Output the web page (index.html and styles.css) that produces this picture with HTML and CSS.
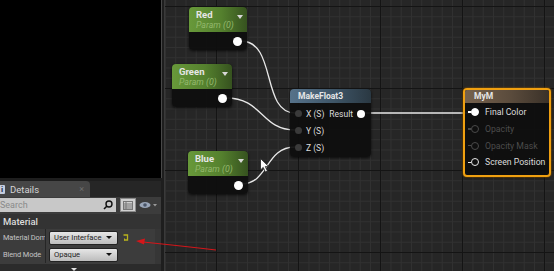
FILE: index.html
```html
<!DOCTYPE html>
<html lang="en">
<head>
    <meta charset="UTF-8">
    <title>Material Graph</title>
    <link rel="stylesheet" href="styles.css">
</head>
<body>
    <div class="left">
        <div class="viewport"></div>
        <div class="details">
            <div class="tabbar">
                <div class="tab">
                    <span class="tab-icon">i</span>
                    <span class="tab-title">Details</span>
                    <span class="tab-close">×</span>
                </div>
            </div>
            <div class="panel">
                <div class="search-row">
                    <div class="search">
                        <span>Search</span>
                        <svg class="magnifier" width="10" height="10" viewBox="0 0 10 10">
                            <circle cx="6" cy="4" r="3" fill="none" stroke="#111" stroke-width="1.4"/>
                            <line x1="4" y1="6" x2="1" y2="9" stroke="#111" stroke-width="1.6"/>
                        </svg>
                    </div>
                    <div class="grid-btn">
                        <svg width="10" height="9" viewBox="0 0 10 9">
                            <rect x="0.5" y="0.5" width="9" height="8" fill="none" stroke="#777"/>
                            <line x1="0" y1="3" x2="10" y2="3" stroke="#777"/>
                            <line x1="0" y1="5" x2="10" y2="5" stroke="#777"/>
                            <line x1="0" y1="7" x2="10" y2="7" stroke="#777"/>
                            <line x1="3" y1="0" x2="3" y2="9" stroke="#777"/>
                        </svg>
                    </div>
                    <div class="eye">
                        <svg width="19" height="8" viewBox="0 0 19 8">
                            <ellipse cx="6" cy="4" rx="5.5" ry="3" fill="#9aa6b8"/>
                            <circle cx="6" cy="4" r="1.8" fill="#4a5568"/>
                            <path d="M14 3 L18 3 L16 5.5 Z" fill="#9a9a9a"/>
                        </svg>
                    </div>
                </div>
                <div class="category">Material</div>
                <div class="props">
                    <div class="prop">
                        <div class="prop-name">Material Dom</div>
                        <div class="prop-value">
                            <div class="combo">User Interface<span class="caret"></span></div>
                            <svg class="reset" width="6" height="7" viewBox="0 0 6 7">
                                <path d="M0.5 1 L4.5 1 L4.5 6 L1.5 6" fill="none" stroke="#b8b21c" stroke-width="1.3"/>
                                <path d="M1.5 4.5 L1.5 6.8" stroke="#b8b21c" stroke-width="1"/>
                            </svg>
                        </div>
                    </div>
                    <div class="prop">
                        <div class="prop-name">Blend Mode</div>
                        <div class="prop-value">
                            <div class="combo">Opaque<span class="caret"></span></div>
                        </div>
                    </div>
                </div>
            </div>
            <div class="panel-foot"><span class="more"></span></div>
        </div>
    </div>

    <div class="graph">
        <svg class="wires" width="389" height="271">
            <path d="M 76 41 C 112 41, 96 113, 130 113"/>
            <path d="M 61 98 C 98 98, 96 130, 130 130"/>
            <path d="M 76 184 C 104 184, 100 147, 130 147"/>
            <path d="M 196 113 L 306 113"/>
        </svg>

        <div class="node param" style="left: 24px; top: 7px; width: 58px;">
            <div class="node-head">
                <div class="node-title">Red</div>
                <div class="node-sub">Param (0)</div>
                <span class="head-caret"></span>
            </div>
            <div class="node-body"><span class="pin-out"></span></div>
        </div>

        <div class="node param" style="left: 7px; top: 64px; width: 60px;">
            <div class="node-head">
                <div class="node-title">Green</div>
                <div class="node-sub">Param (0)</div>
                <span class="head-caret"></span>
            </div>
            <div class="node-body"><span class="pin-out"></span></div>
        </div>

        <div class="node param" style="left: 23px; top: 151px; width: 60px;">
            <div class="node-head">
                <div class="node-title">Blue</div>
                <div class="node-sub">Param (0)</div>
                <span class="head-caret"></span>
            </div>
            <div class="node-body"><span class="pin-out"></span></div>
        </div>

        <div class="node func" style="left: 125px; top: 89px; width: 81px;">
            <div class="node-head">MakeFloat3</div>
            <div class="node-rows">
                <div class="row"><span class="pin-in"></span>X (S)<span class="row-out">Result<span class="pin-result"></span></span></div>
                <div class="row"><span class="pin-in"></span>Y (S)</div>
                <div class="row"><span class="pin-in"></span>Z (S)</div>
            </div>
        </div>

        <div class="node result" style="left: 298px; top: 88px; width: 88px;">
            <div class="node-head">MyM</div>
            <div class="node-rows">
                <div class="row"><span class="pin-main"></span>Final Color</div>
                <div class="row off"><span class="pin-ring"></span>Opacity</div>
                <div class="row off"><span class="pin-ring"></span>Opacity Mask</div>
                <div class="row"><span class="pin-ring"></span>Screen Position</div>
            </div>
        </div>

        <svg class="cursor" width="10" height="15" viewBox="0 0 10 15">
            <path d="M0.5 0.5 L0.5 12 L3.2 9.4 L5.4 14 L7.4 13.1 L5.3 8.6 L8.8 8.6 Z" fill="#fff" stroke="#222" stroke-width="0.8"/>
        </svg>
    </div>

    <svg class="annotation" width="554" height="271">
        <path d="M 216 250 Q 182 246 143 242" fill="none" stroke="#d4161a" stroke-width="1.2"/>
        <path d="M 136 241 L 145 238.5 L 144 244.5 Z" fill="#d4161a"/>
    </svg>
</body>
</html>
```

FILE: styles.css
```css
body {
    margin: 0;
    width: 554px;
    height: 271px;
    overflow: hidden;
    display: flex;
    position: relative;
    background-color: #1c1c1c;
    font-family: Roboto, "Liberation Sans", sans-serif;
}

/* left column: viewport + details */

.left {
    width: 165px;
    flex: none;
    display: flex;
    flex-direction: column;
    box-sizing: border-box;
    border-right: 1px solid #3a3a3a;
    background-color: #1e1e1e;
}

.viewport {
    width: 162px;
    height: 178px;
    box-sizing: border-box;
    background-color: #000;
    border-right: 1px solid #484848;
}

.details {
    flex: 1;
    display: flex;
    flex-direction: column;
    margin-top: 3px;
    width: 161px;
}

.tabbar {
    height: 16px;
    background-color: #262626;
    display: flex;
}

.tab {
    width: 90px;
    display: flex;
    align-items: center;
    background-color: #464646;
    border-radius: 0 4px 0 0;
    color: #d4d4d4;
    font-size: 9.5px;
}

.tab-icon {
    width: 6px;
    height: 9px;
    margin-left: -1px;
    background-color: #c4ccdc;
    color: #1c2a48;
    font-size: 8px;
    font-weight: bold;
    line-height: 9px;
    text-align: center;
    border-radius: 1px;
}

.tab-title {
    margin-left: 5px;
    flex: 1;
}

.tab-close {
    color: #6e6e6e;
    font-size: 9px;
    margin-right: 6px;
}

.panel {
    background-color: #3c3c3c;
    padding-top: 1px;
}

.search-row {
    display: flex;
    align-items: center;
    height: 14px;
}

.search {
    width: 116px;
    height: 14px;
    background-color: #c8c8c8;
    display: flex;
    align-items: center;
    justify-content: space-between;
    box-sizing: border-box;
    padding: 0 3px 0 0;
    font-size: 9px;
    color: #8a8a8a;
}

.grid-btn {
    width: 16px;
    height: 14px;
    margin-left: 4px;
    background-color: #d0d0d0;
    border: 1px solid #8c8c8c;
    box-sizing: border-box;
    display: flex;
    align-items: center;
    justify-content: center;
}

.eye {
    margin-left: 3px;
    display: flex;
    align-items: center;
}

.category {
    margin-top: 2px;
    height: 15px;
    line-height: 15px;
    padding-left: 3px;
    background-color: #333;
    color: #dcdcdc;
    font-size: 9.5px;
    font-weight: 500;
}

.props {
    border-right: 6px solid #363636;
    padding-bottom: 1px;
}

.prop {
    display: flex;
    height: 17px;
    align-items: center;
}

.prop-name {
    flex: none;
    width: 46px;
    height: 17px;
    line-height: 17px;
    padding-left: 3px;
    box-sizing: border-box;
    border-right: 1px solid #262626;
    color: #c4c4c4;
    font-size: 7.4px;
    letter-spacing: -0.1px;
    white-space: nowrap;
    overflow: hidden;
}

.prop-value {
    display: flex;
    align-items: center;
    gap: 5px;
    padding-left: 3px;
}

.combo {
    flex: none;
    width: 69px;
    height: 14px;
    box-sizing: border-box;
    padding-left: 4px;
    border: 1px solid #222;
    border-radius: 2px;
    background: linear-gradient(#e6e6e6, #bcbcbc);
    color: #1e1e1e;
    font-size: 7.6px;
    line-height: 12px;
    white-space: nowrap;
    position: relative;
}

.caret {
    position: absolute;
    right: 5px;
    top: 4px;
    border-left: 3px solid transparent;
    border-right: 3px solid transparent;
    border-top: 3px solid #111;
}

.panel-foot {
    flex: 1;
    background-color: #2b2b2b;
    display: flex;
    justify-content: center;
    padding-top: 4px;
    box-sizing: border-box;
}

.more {
    width: 0;
    height: 0;
    margin-left: -14px;
    border-left: 3px solid transparent;
    border-right: 3px solid transparent;
    border-top: 3px solid #e0e0e0;
}

/* graph canvas */

.graph {
    flex: 1;
    position: relative;
    background-color: #262626;
    background-image:
        linear-gradient(to right, #141414 1px, transparent 1px),
        linear-gradient(to bottom, #141414 1px, transparent 1px),
        linear-gradient(to right, #313131 1px, transparent 1px),
        linear-gradient(to bottom, #313131 1px, transparent 1px);
    background-size: 82px 82px, 82px 82px, 10.25px 10.25px, 10.25px 10.25px;
    background-position: 51px 6px, 51px 6px, 0px 6px, 0px 6px;
}

.wires {
    position: absolute;
    left: 0;
    top: 0;
}

.wires path {
    fill: none;
    stroke: #e8e8e8;
    stroke-width: 1.3;
}

.node {
    position: absolute;
    border-radius: 4px;
    background-color: rgba(14, 14, 14, 0.94);
    box-shadow: 0 1px 3px rgba(0, 0, 0, 0.7);
    color: #e6e6e6;
}

.node-head {
    border-radius: 4px 4px 0 0;
    position: relative;
}

.param .node-head {
    height: 25px;
    box-sizing: border-box;
    padding: 2px 0 0 7px;
    background: linear-gradient(to right, #68993a 0%, #55812e 55%, #36521f 100%);
}

.node-title {
    font-size: 9.5px;
    font-weight: bold;
    line-height: 11px;
}

.node-sub {
    font-size: 8.8px;
    font-style: italic;
    color: #93b86c;
    line-height: 10px;
}

.head-caret {
    position: absolute;
    right: 4px;
    top: 8px;
    border-left: 3px solid transparent;
    border-right: 3px solid transparent;
    border-top: 4px solid #d8d8d8;
}

.node-body {
    height: 18px;
    position: relative;
}

.pin-out {
    position: absolute;
    right: 5px;
    top: 5px;
    width: 9px;
    height: 9px;
    border-radius: 50%;
    background-color: #fff;
}

.func .node-head {
    height: 14px;
    line-height: 14px;
    padding-left: 8px;
    font-size: 8.5px;
    font-weight: bold;
    background: linear-gradient(to right, #56728a 0%, #3e5567 55%, #2a3842 100%);
}

.node-rows {
    padding: 2px 0 1px;
}

.row {
    height: 17px;
    display: flex;
    align-items: center;
    font-size: 8.5px;
    color: #dcdcdc;
    white-space: nowrap;
}

.pin-in {
    width: 7px;
    height: 7px;
    margin: 0 4px 0 5px;
    border-radius: 50%;
    background-color: #3a3a3a;
}

.row-out {
    margin-left: auto;
    display: flex;
    align-items: center;
}

.pin-result {
    width: 8px;
    height: 8px;
    margin: 0 6px 0 4px;
    border-radius: 50%;
    background-color: #fff;
}

.result {
    border: 2px solid #f0a010;
    box-shadow: 0 0 2px #c47a00, 0 1px 3px rgba(0, 0, 0, 0.7);
    box-sizing: border-box;
    height: 89px;
}

.result .node-head {
    height: 13px;
    line-height: 13px;
    padding-left: 9px;
    font-size: 8.5px;
    font-weight: bold;
    border-radius: 2px 2px 0 0;
    background: linear-gradient(to right, #76624e 0%, #5a4b3c 55%, #3a3128 100%);
}

.result .node-rows {
    padding-top: 1px;
}

.result .row {
    height: 16.7px;
    font-size: 8.7px;
}

.pin-main,
.pin-ring {
    width: 6px;
    height: 6px;
    margin: 0 6px 0 6px;
    border-radius: 50%;
    position: relative;
}

.pin-main {
    background-color: #fff;
    border: 1px solid #fff;
}

.pin-ring {
    border: 1.5px solid #e8e8e8;
}

.pin-main::after,
.pin-ring::after {
    content: "";
    position: absolute;
    left: -4px;
    top: 2px;
    width: 3px;
    height: 1.5px;
    background-color: inherit;
}

.pin-ring::after {
    top: 2.2px;
    background-color: #e8e8e8;
}

.row.off {
    color: #4c4c4c;
}

.row.off .pin-ring {
    border-color: #4a4a4a;
}

.row.off .pin-ring::after {
    background-color: #4a4a4a;
}

.cursor {
    position: absolute;
    left: 95px;
    top: 158px;
}

.annotation {
    position: absolute;
    left: 0;
    top: 0;
    pointer-events: none;
}
```
